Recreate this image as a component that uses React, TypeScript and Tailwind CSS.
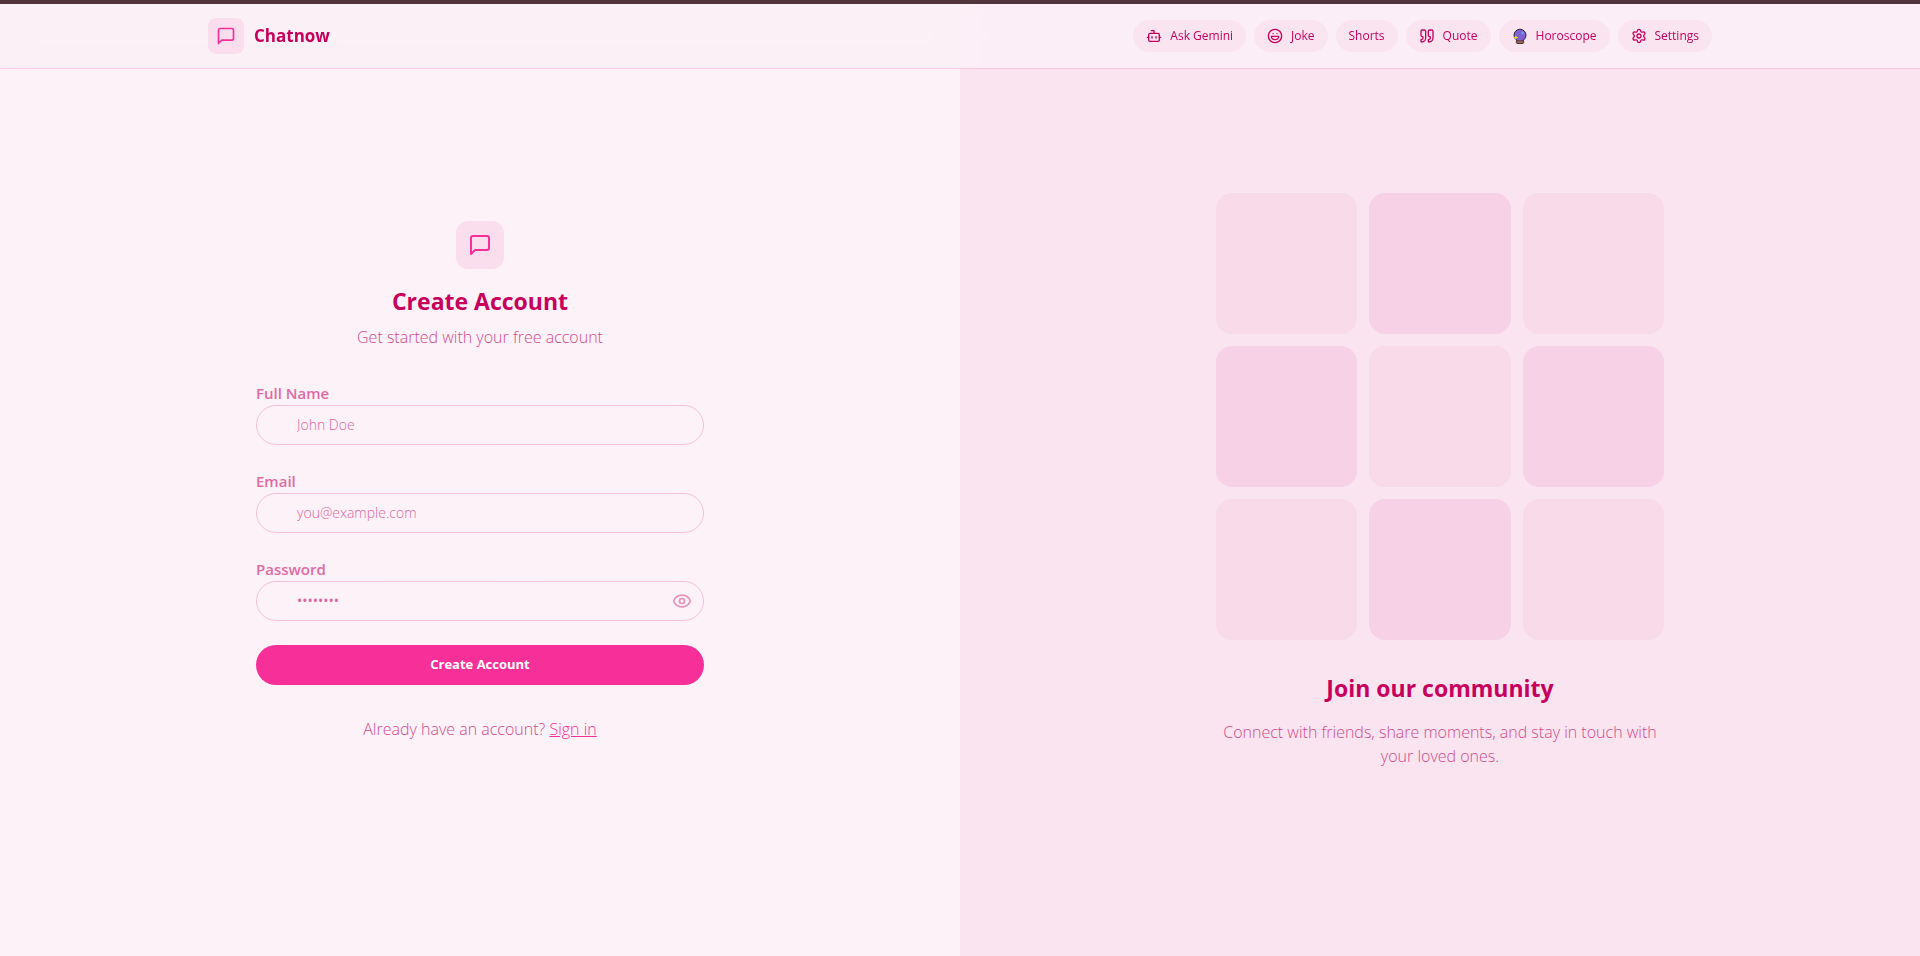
import { useState } from "react";
import type { ReactNode } from "react";
import { Bot, Eye, EyeOff, Quote, Settings } from "lucide-react";

function StrokeIcon({ className, children }: { className: string; children: ReactNode }) {
  return (
    <svg
      viewBox="0 0 24 24"
      fill="none"
      stroke="currentColor"
      strokeWidth="2"
      strokeLinecap="round"
      strokeLinejoin="round"
      className={className}
      aria-hidden="true"
    >
      {children}
    </svg>
  );
}

function MessageIcon({ className }: { className: string }) {
  return (
    <StrokeIcon className={className}>
      <path d="M21 15a2 2 0 0 1-2 2H7l-4 4V5a2 2 0 0 1 2-2h14a2 2 0 0 1 2 2z" />
    </StrokeIcon>
  );
}

function LaughIcon() {
  return (
    <StrokeIcon className="size-4">
      <circle cx="12" cy="12" r="10" />
      <path d="M17.5 12.5a5.5 5 0 0 1-11 0Z" />
      <path d="M9 8.500h.01M15 8.500h.01" />
    </StrokeIcon>
  );
}

function CrystalBall() {
  return (
    <svg viewBox="0 0 16 16" className="size-4" aria-hidden="true">
      <path d="M4.500 12.500h7l.3 2.200-.8.800H5l-.8-.8z" fill="#a0604c" stroke="#2a1d22" strokeWidth="0.800" strokeLinejoin="round" />
      <circle cx="8" cy="7.200" r="6" fill="#7f60d2" stroke="#1d1a26" strokeWidth="0.900" />
      <path d="M4.800 12.800h6.400v1.400H4.800z" fill="#a0604c" />
      <path d="M10.600 3.600v2.800M9.300 5h2.600" stroke="#5fb4ee" strokeWidth="1" />
      <path d="M3.800 7.200l.7 1.600 1.600.7-1.600.7-.7 1.600-.7-1.600-1.600-.7 1.600-.7z" fill="#ffe100" />
    </svg>
  );
}

const links = [
  { label: "Ask Gemini", icon: <Bot className="size-4" /> },
  { label: "Joke", icon: <LaughIcon /> },
  { label: "Shorts", icon: null },
  { label: "Quote", icon: <Quote className="size-4" /> },
  { label: "Horoscope", icon: <CrystalBall /> },
  { label: "Settings", icon: <Settings className="size-4" /> },
];

function Navbar() {
  return (
    <header className="border-b border-[#f8c9e2] bg-[#fcf0f7]/85 backdrop-blur-lg">
      <div className="mx-auto flex min-h-16 max-w-[1536px] flex-wrap items-center justify-between gap-2 px-4">
        <a href="#" className="flex items-center gap-2.5">
          <span className="flex size-9 items-center justify-center rounded-lg bg-[#fadeed]">
            <MessageIcon className="size-5 text-[#f62f99]" />
          </span>
          <span className="text-[17px] font-bold text-[#c6005c]">Chatnow</span>
        </a>
        <nav className="flex flex-wrap items-center gap-2">
          {links.map((link) => (
            <a
              key={link.label}
              href="#"
              className="flex h-8 items-center gap-2 rounded-full bg-[#fae4f0] px-[13px] text-xs font-medium text-[#c6005c]"
            >
              {link.icon}
              {link.label}
            </a>
          ))}
        </nav>
      </div>
    </header>
  );
}

const labelClass = "block text-[15px] leading-6 font-semibold text-[#e06ba4]";

const inputClass =
  "h-10 w-full rounded-full border border-[#f3c0da] bg-transparent pr-10 pl-10 text-sm font-light text-[#c6005c] outline-none placeholder:text-[#dd64a0]";

function SignUpForm() {
  const [showPassword, setShowPassword] = useState(false);
  return (
    <div className="w-full max-w-md">
      <div className="mb-8 flex flex-col items-center gap-2 text-center">
        <div className="flex size-12 items-center justify-center rounded-xl bg-[#fadeed]">
          <MessageIcon className="size-6 text-[#f62f99]" />
        </div>
        <h1 className="mt-2 text-[23px] leading-8 font-bold text-[#c6005c]">Create Account</h1>
        <p className="font-light text-[#d34b8d]">Get started with your free account</p>
      </div>
      <form className="flex flex-col gap-6" onSubmit={(e) => e.preventDefault()}>
        <div>
          <label htmlFor="name" className={labelClass}>Full Name</label>
          <input id="name" type="text" placeholder="John Doe" className={inputClass} />
        </div>
        <div>
          <label htmlFor="email" className={labelClass}>Email</label>
          <input id="email" type="email" placeholder="you@example.com" className={inputClass} />
        </div>
        <div>
          <label htmlFor="password" className={labelClass}>Password</label>
          <div className="relative">
            <input
              id="password"
              type={showPassword ? "text" : "password"}
              placeholder="••••••••"
              className={`${inputClass} placeholder:font-normal`}
            />
            <button
              type="button"
              aria-label="Toggle password visibility"
              onClick={() => setShowPassword(!showPassword)}
              className="absolute inset-y-0 right-0 flex items-center pr-3 text-[#e88fbb]"
            >
              {showPassword ? <EyeOff className="size-5" /> : <Eye className="size-5" />}
            </button>
          </div>
        </div>
        <button type="submit" className="h-10 w-full rounded-full bg-[#f62f99] text-[13px] font-bold text-white">
          Create Account
        </button>
      </form>
      <p className="mt-8 text-center font-light text-[#d34b8d]">
        Already have an account?{" "}
        <a href="#" className="text-[#f62f99] underline">Sign in</a>
      </p>
    </div>
  );
}

function CommunityPanel() {
  return (
    <div className="w-full max-w-md text-center">
      <div className="mb-8 grid grid-cols-3 gap-3">
        {Array.from({ length: 9 }, (_, i) => (
          <div
            key={i}
            className={i % 2 === 0 ? "aspect-square rounded-2xl bg-[#f8dae9]" : "aspect-square rounded-2xl bg-[#f7d2e7]"}
          />
        ))}
      </div>
      <h2 className="mb-4 text-[23px] leading-8 font-bold text-[#c6005c]">Join our community</h2>
      <p className="font-light text-[#d34b8d]">
        Connect with friends, share moments, and stay in touch with your loved ones.
      </p>
    </div>
  );
}

export default function App() {
  return (
    <div className="flex min-h-screen flex-col bg-[#fdf2f8] font-['Open_Sans','Noto_Sans',sans-serif] lg:bg-linear-to-r lg:from-[#fdf2f8] lg:from-50% lg:to-[#fae4f0] lg:to-50%">
      <div className="h-1 bg-[#50343b]" />
      <Navbar />
      <main className="grid flex-1 lg:grid-cols-2">
        <section className="flex items-center justify-center px-6 pb-16">
          <SignUpForm />
        </section>
        <section className="hidden items-center justify-center px-6 pb-16 lg:flex">
          <CommunityPanel />
        </section>
      </main>
    </div>
  );
}
